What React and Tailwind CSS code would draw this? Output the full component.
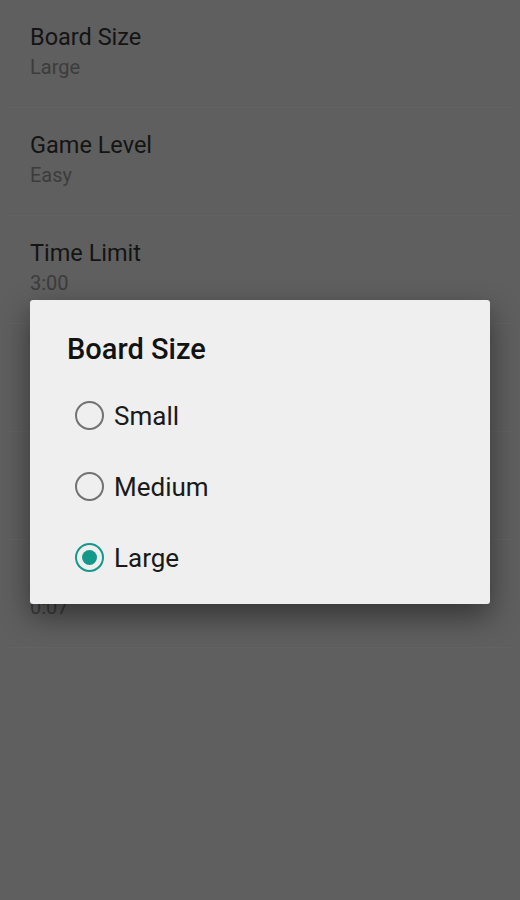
const settings = [
  { title: "Board Size", value: "Large" },
  { title: "Game Level", value: "Easy" },
  { title: "Time Limit", value: "3:00" },
  { title: "Sound", value: "On" },
  { title: "Vibration", value: "Off" },
  { title: "Best Time", value: "0:07" },
];

const options = ["Small", "Medium", "Large"];

const Radio = ({ checked }) =>
  checked ? (
    <span className="flex h-[29px] w-[29px] items-center justify-center rounded-full border-[2.5px] border-[#13998a]">
      <span className="h-[15px] w-[15px] rounded-full bg-[#13998a]" />
    </span>
  ) : (
    <span className="h-[29px] w-[29px] rounded-full border-[2.5px] border-[#727272]" />
  );

export default function App() {
  return (
    <div
      className="relative h-[900px] w-[520px] overflow-hidden bg-[#5f5f5f]"
      style={{ fontFamily: "Roboto, 'Noto Sans', sans-serif" }}
    >
      {/* settings list (dimmed) */}
      <div className="flex flex-col">
        {settings.map((item) => (
          <div key={item.title} className="flex flex-col">
            <div className="h-[107px] px-[30px] pt-[22px]">
              <div className="text-[23.5px] leading-[30px] text-[#141414]">
                {item.title}
              </div>
              <div className="text-[20px] leading-[30px] text-[#3c3c3c]">
                {item.value}
              </div>
            </div>
            <div className="mx-2 h-px bg-[#636363]" />
          </div>
        ))}
      </div>

      {/* dialog */}
      <div className="absolute left-[30px] top-[300px] w-[460px] rounded-[3px] bg-[#efefef] pb-[11px] pt-[30px] shadow-[0_12px_30px_rgba(0,0,0,0.45)]">
        <div className="h-[38px] pl-[37px] text-[29px] font-medium leading-[38px] text-[#121212]">
          Board Size
        </div>
        <div className="mt-[12px] flex flex-col">
          {options.map((opt) => (
            <div key={opt} className="flex h-[71px] items-center gap-[10px] pl-[45px]">
              <Radio checked={opt === "Large"} />
              <span className="text-[26px] leading-[32px] text-[#1a1a1a]">{opt}</span>
            </div>
          ))}
        </div>
      </div>
    </div>
  );
}
